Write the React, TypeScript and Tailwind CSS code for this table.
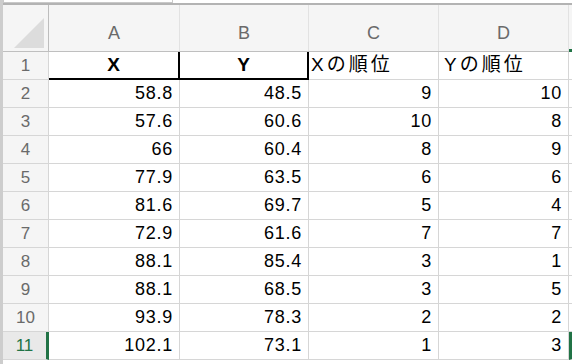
import React from 'react';

const rows: [string, string, string, string][] = [
  ['58.8', '48.5', '9', '10'],
  ['57.6', '60.6', '10', '8'],
  ['66', '60.4', '8', '9'],
  ['77.9', '63.5', '6', '6'],
  ['81.6', '69.7', '5', '4'],
  ['72.9', '61.6', '7', '7'],
  ['88.1', '85.4', '3', '1'],
  ['88.1', '68.5', '3', '5'],
  ['93.9', '78.3', '2', '2'],
  ['102.1', '73.1', '1', '3'],
];

const cols = 'grid grid-cols-[46px_131px_129px_130px_130px_1fr]';
const cell = 'border-r border-b border-[#d6d6d6] h-[28px] flex items-center';
const num = `${cell} justify-end pr-[6px] text-[18px] tracking-[0.04em] text-black`;

const App: React.FC = () => {
  return (
    <div
      className="w-[572px] h-[364px] overflow-hidden bg-white border-l-[3px] border-[#cdcdcd]"
      style={{ fontFamily: '"Liberation Sans", "Noto Sans CJK JP", sans-serif' }}
    >
      {/* formula bar remnant */}
      <div className="h-[5px] border-b-2 border-[#b3b3b3]">
        <div className="w-[170px] h-[3px] border border-t-0 border-[#c9c9c9]" />
      </div>

      {/* column headers */}
      <div className={`${cols} h-[47px] bg-[#f5f5f5] border-b border-[#bfbfbf]`}>
        <div className="border-r border-[#bdbdbd] flex items-end justify-end pr-[4px] pb-[3px]">
          <svg width="30" height="30" viewBox="0 0 30 30">
            <polygon points="30,0 30,30 0,30" fill="#dcdcdc" />
          </svg>
        </div>
        {['A', 'B', 'C', 'D'].map(c => (
          <div key={c} className="border-r border-[#e2e2e2] flex items-center justify-center pt-[10px] text-[18px] text-[#6a6a6a]">
            {c}
          </div>
        ))}
        <div className="border-b-[3px] border-[#217346] -mb-px" />
      </div>

      {/* row 1 */}
      <div className={cols}>
        <div className={`${cell} justify-center border-[#bdbdbd] bg-[#f5f5f5] text-[17px] text-[#6a6a6a]`}>1</div>
        <div className="h-[28px] border-r-2 border-b-2 border-black flex items-center justify-center text-[19px] font-bold">X</div>
        <div className="h-[28px] border-r-2 border-b-2 border-black flex items-center justify-center text-[19px] font-bold">Y</div>
        <div className={`${cell} pl-[2px] text-[19px] tracking-[0.16em] whitespace-nowrap`}>Xの順位</div>
        <div className={`${cell} pl-[5px] text-[19px] tracking-[0.16em] whitespace-nowrap`}>Yの順位</div>
        <div className={`${cell} border-r-0`} />
      </div>

      {rows.map((r, i) => {
        const n = i + 2;
        const last = n === 11;
        return (
          <div key={n} className={cols}>
            <div
              className={`${cell} justify-center border-[#bdbdbd] text-[17px] ${
                last ? 'bg-[#e9e9e9] text-[#217346] border-r-[3px] border-r-[#217346]' : 'bg-[#f5f5f5] text-[#6a6a6a]'
              }`}
            >
              {n}
            </div>
            {r.map((v, j) => (
              <div key={j} className={num}>{v}</div>
            ))}
            <div className={`${cell} border-r-0 ${last ? 'border-l-[3px] border-t-2 border-l-[#217346] border-t-[#217346]' : ''}`} />
          </div>
        );
      })}
    </div>
  );
};

export default App;
